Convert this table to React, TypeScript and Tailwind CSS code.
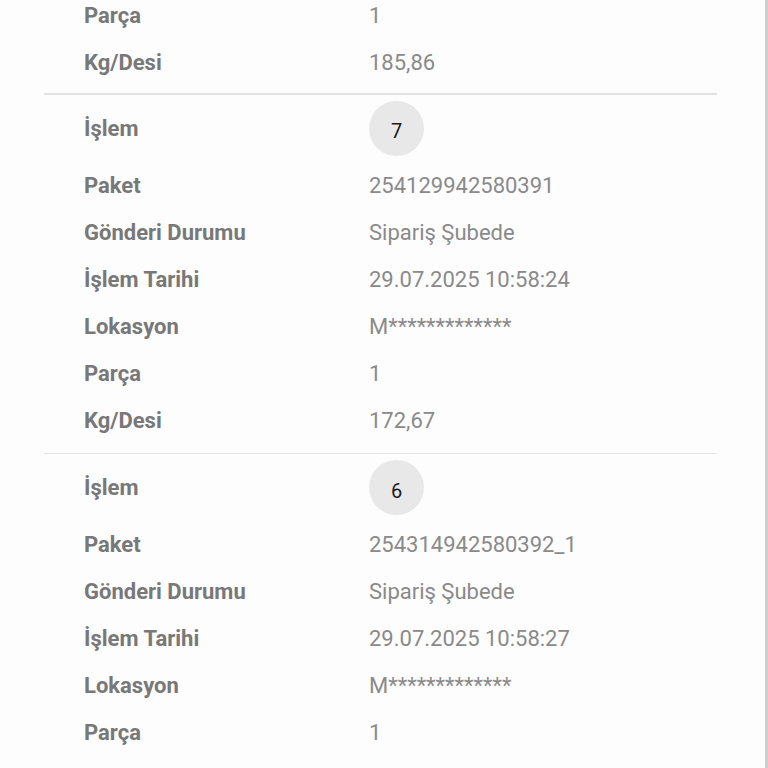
import React from "react";

type Row = { label: string; value: string };

const LabelRow = ({ label, value }: Row) => (
  <div className="flex h-[47px] items-center">
    <div className="w-[325px] shrink-0 pl-[40px] text-[22px] font-bold text-[#787878]">{label}</div>
    <div className="text-[22px] text-[#8a8a8a]">{value}</div>
  </div>
);

const IslemRow = ({ n }: { n: string }) => (
  <div className="flex h-[67px] items-center">
    <div className="w-[325px] shrink-0 pl-[40px] text-[22px] font-bold text-[#787878]">İşlem</div>
    <div className="flex h-[55px] w-[55px] items-center justify-center rounded-full bg-[#e8e8e8] pt-[6px] text-[20px] text-[#1a1a1a]">
      {n}
    </div>
  </div>
);

const Divider = () => <div className="h-[1.5px] w-[673px] bg-[#e2e2e2]" />;

const Section = ({ n, rows }: { n: string; rows: Row[] }) => (
  <div>
    <Divider />
    <IslemRow n={n} />
    {rows.map((r) => (
      <LabelRow key={r.label} {...r} />
    ))}
    <div className="h-[9px]" />
  </div>
);

export default function App() {
  return (
    <div
      className="flex h-[768px] w-[768px] overflow-hidden bg-[#fdfdfd]"
      style={{ fontFamily: "Roboto, 'Noto Sans', sans-serif" }}
    >
      <div className="flex-1 overflow-hidden pl-[44px]">
        <div className="-mt-[8px]">
          <LabelRow label="Parça" value="1" />
          <LabelRow label="Kg/Desi" value="185,86" />
          <div className="h-[7px]" />
          <Section
            n="7"
            rows={[
              { label: "Paket", value: "254129942580391" },
              { label: "Gönderi Durumu", value: "Sipariş Şubede" },
              { label: "İşlem Tarihi", value: "29.07.2025 10:58:24" },
              { label: "Lokasyon", value: "M*************" },
              { label: "Parça", value: "1" },
              { label: "Kg/Desi", value: "172,67" },
            ]}
          />
          <div>
            <Divider />
            <IslemRow n="6" />
            <LabelRow label="Paket" value="254314942580392_1" />
            <LabelRow label="Gönderi Durumu" value="Sipariş Şubede" />
            <LabelRow label="İşlem Tarihi" value="29.07.2025 10:58:27" />
            <LabelRow label="Lokasyon" value="M*************" />
            <LabelRow label="Parça" value="1" />
          </div>
        </div>
      </div>
      <div className="w-[3px] bg-[#cfcfcf]" />
    </div>
  );
}
